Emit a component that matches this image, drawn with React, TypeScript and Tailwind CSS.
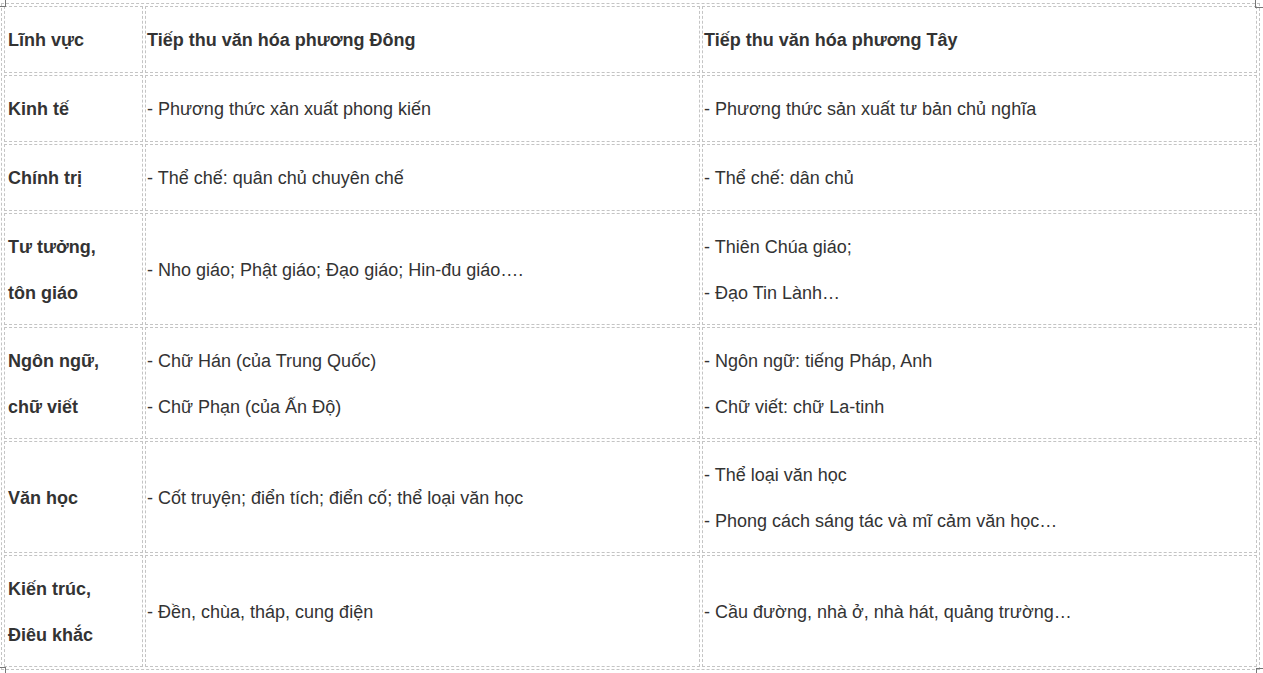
import React from "react";

type Row = {
  field: string[];
  east: string[];
  west: string[];
};

const rows: Row[] = [
  {
    field: ["Kinh tế"],
    east: ["- Phương thức xản xuất phong kiến"],
    west: ["- Phương thức sản xuất tư bản chủ nghĩa"],
  },
  {
    field: ["Chính trị"],
    east: ["- Thể chế: quân chủ chuyên chế"],
    west: ["- Thể chế: dân chủ"],
  },
  {
    field: ["Tư tưởng,", "tôn giáo"],
    east: ["- Nho giáo; Phật giáo; Đạo giáo; Hin-đu giáo…."],
    west: ["- Thiên Chúa giáo;", "- Đạo Tin Lành…"],
  },
  {
    field: ["Ngôn ngữ,", "chữ viết"],
    east: ["- Chữ Hán (của Trung Quốc)", "- Chữ Phạn (của Ấn Độ)"],
    west: ["- Ngôn ngữ: tiếng Pháp, Anh", "- Chữ viết: chữ La-tinh"],
  },
  {
    field: ["Văn học"],
    east: ["- Cốt truyện; điển tích; điển cố; thể loại văn học"],
    west: ["- Thể loại văn học", "- Phong cách sáng tác và mĩ cảm văn học…"],
  },
  {
    field: ["Kiến trúc,", "Điêu khắc"],
    east: ["- Đền, chùa, tháp, cung điện"],
    west: ["- Cầu đường, nhà ở, nhà hát, quảng trường…"],
  },
];

const single = "border border-dashed border-[#c4c4c4] px-[1px] pt-[10px] pb-[9px] align-middle text-left";
const double = "border border-dashed border-[#c4c4c4] px-[1px] pt-[10px] pb-[8px] align-middle text-left";

const Lines = ({ lines }: { lines: string[] }) => (
  <>
    {lines.map((l) => (
      <div key={l} className="leading-[46px] whitespace-nowrap">
        {l}
      </div>
    ))}
  </>
);

const App = () => {
  return (
    <div
      className="relative w-[1263px] h-[673px] overflow-hidden bg-white text-[18px] text-[#333]"
      style={{ fontFamily: '"Liberation Sans", Arial, sans-serif' }}
    >
      {/* crop marks */}
      <div className="absolute left-0 top-0 w-[6px] h-[7px] border-r border-b border-[#777]" />
      <div className="absolute left-[1255px] top-0 w-[8px] h-[8px] border-l border-b border-[#777]" />
      <div className="absolute left-0 top-[667px] w-[6px] h-[6px] border-r border-t border-[#777]" />
      <div className="absolute left-[1256px] top-[668px] w-[7px] h-[5px] border-l border-t border-[#777]" />

      <table className="ml-[1px] mt-[3px] w-[1259px] table-fixed border-separate border-spacing-[2px] border border-dashed border-[#c4c4c4]">
        <colgroup>
          <col className="w-[139px]" />
          <col className="w-[555px]" />
          <col className="w-[555px]" />
        </colgroup>
        <tbody>
          <tr className="font-bold">
            <td className={`${single} pl-[3px]`}>
              <Lines lines={["Lĩnh vực"]} />
            </td>
            <td className={single}>
              <Lines lines={["Tiếp thu văn hóa phương Đông"]} />
            </td>
            <td className={single}>
              <Lines lines={["Tiếp thu văn hóa phương Tây"]} />
            </td>
          </tr>
          {rows.map((r) => {
            const cell = Math.max(r.field.length, r.east.length, r.west.length) > 1 ? double : single;
            return (
              <tr key={r.field[0]}>
                <td className={`${cell} pl-[3px] font-bold`}>
                  <Lines lines={r.field} />
                </td>
                <td className={cell}>
                  <Lines lines={r.east} />
                </td>
                <td className={cell}>
                  <Lines lines={r.west} />
                </td>
              </tr>
            );
          })}
        </tbody>
      </table>
    </div>
  );
};

export default App;
